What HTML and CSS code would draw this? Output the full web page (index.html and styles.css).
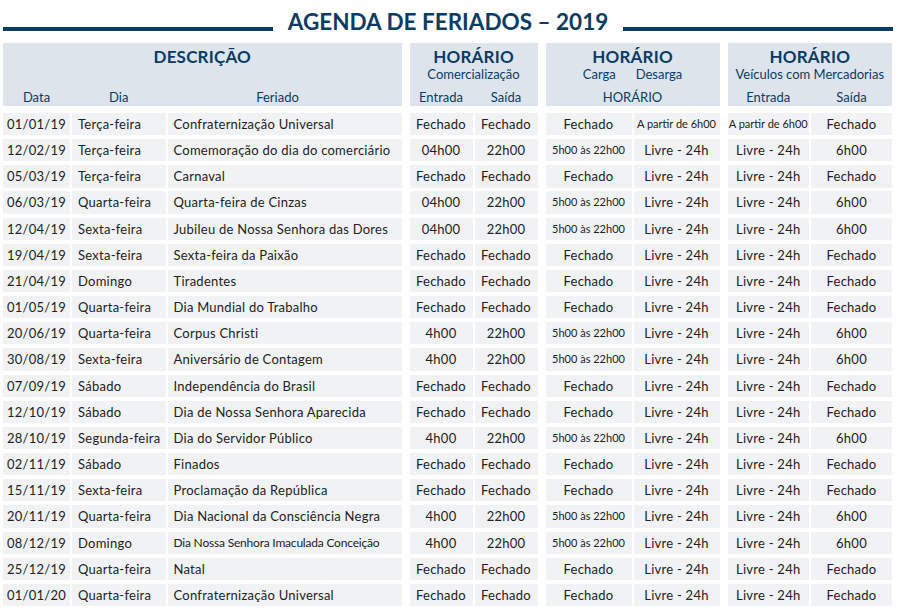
FILE: index.html
```html
<!DOCTYPE html>
<html lang="pt-BR">
<head>
<meta charset="utf-8">
<title>Agenda de Feriados 2019</title>
<link rel="stylesheet" href="styles.css">
</head>
<body>
<div class="page">
  <div class="title">
    <span class="rule"></span>
    <h1>AGENDA DE FERIADOS – 2019</h1>
    <span class="rule"></span>
  </div>

  <div class="hdr">
    <div class="panel p1">
      <div class="ph">DESCRIÇÃO</div>
      <div class="ps"></div>
      <div class="pc cols3"><span>Data</span><span>Dia</span><span>Feriado</span></div>
    </div>
    <div class="panel p2 gs">
      <div class="ph">HORÁRIO</div>
      <div class="ps">Comercialização</div>
      <div class="pc cols2a"><span>Entrada</span><span>Saída</span></div>
    </div>
    <div class="panel p3 gs">
      <div class="ph">HORÁRIO</div>
      <div class="ps">Carga&nbsp;&nbsp;&nbsp;&nbsp;&nbsp;&nbsp;Desarga</div>
      <div class="pc"><span>HORÁRIO</span></div>
    </div>
    <div class="panel p4 gs">
      <div class="ph">HORÁRIO</div>
      <div class="ps">Veículos com Mercadorias</div>
      <div class="pc cols2b"><span>Entrada</span><span>Saída</span></div>
    </div>
  </div>

  <div class="body">
    <div>01/01/19</div><div>Terça-feira</div><div>Confraternização Universal</div><div>Fechado</div><div>Fechado</div><div>Fechado</div><div class="sm">A partir de 6h00</div><div class="sm">A partir de 6h00</div><div>Fechado</div>
    <div>12/02/19</div><div>Terça-feira</div><div>Comemoração do dia do comerciário</div><div>04h00</div><div>22h00</div><div class="sm">5h00 às 22h00</div><div>Livre - 24h</div><div>Livre - 24h</div><div>6h00</div>
    <div>05/03/19</div><div>Terça-feira</div><div>Carnaval</div><div>Fechado</div><div>Fechado</div><div>Fechado</div><div>Livre - 24h</div><div>Livre - 24h</div><div>Fechado</div>
    <div>06/03/19</div><div>Quarta-feira</div><div>Quarta-feira de Cinzas</div><div>04h00</div><div>22h00</div><div class="sm">5h00 às 22h00</div><div>Livre - 24h</div><div>Livre - 24h</div><div>6h00</div>
    <div>12/04/19</div><div>Sexta-feira</div><div>Jubileu de Nossa Senhora das Dores</div><div>04h00</div><div>22h00</div><div class="sm">5h00 às 22h00</div><div>Livre - 24h</div><div>Livre - 24h</div><div>6h00</div>
    <div>19/04/19</div><div>Sexta-feira</div><div>Sexta-feira da Paixão</div><div>Fechado</div><div>Fechado</div><div>Fechado</div><div>Livre - 24h</div><div>Livre - 24h</div><div>Fechado</div>
    <div>21/04/19</div><div>Domingo</div><div>Tiradentes</div><div>Fechado</div><div>Fechado</div><div>Fechado</div><div>Livre - 24h</div><div>Livre - 24h</div><div>Fechado</div>
    <div>01/05/19</div><div>Quarta-feira</div><div>Dia Mundial do Trabalho</div><div>Fechado</div><div>Fechado</div><div>Fechado</div><div>Livre - 24h</div><div>Livre - 24h</div><div>Fechado</div>
    <div>20/06/19</div><div>Quarta-feira</div><div>Corpus Christi</div><div>4h00</div><div>22h00</div><div class="sm">5h00 às 22h00</div><div>Livre - 24h</div><div>Livre - 24h</div><div>6h00</div>
    <div>30/08/19</div><div>Sexta-feira</div><div>Aniversário de Contagem</div><div>4h00</div><div>22h00</div><div class="sm">5h00 às 22h00</div><div>Livre - 24h</div><div>Livre - 24h</div><div>6h00</div>
    <div>07/09/19</div><div>Sábado</div><div>Independência do Brasil</div><div>Fechado</div><div>Fechado</div><div>Fechado</div><div>Livre - 24h</div><div>Livre - 24h</div><div>Fechado</div>
    <div>12/10/19</div><div>Sábado</div><div>Dia de Nossa Senhora Aparecida</div><div>Fechado</div><div>Fechado</div><div>Fechado</div><div>Livre - 24h</div><div>Livre - 24h</div><div>Fechado</div>
    <div>28/10/19</div><div>Segunda-feira</div><div>Dia do Servidor Público</div><div>4h00</div><div>22h00</div><div class="sm">5h00 às 22h00</div><div>Livre - 24h</div><div>Livre - 24h</div><div>6h00</div>
    <div>02/11/19</div><div>Sábado</div><div>Finados</div><div>Fechado</div><div>Fechado</div><div>Fechado</div><div>Livre - 24h</div><div>Livre - 24h</div><div>Fechado</div>
    <div>15/11/19</div><div>Sexta-feira</div><div>Proclamação da República</div><div>Fechado</div><div>Fechado</div><div>Fechado</div><div>Livre - 24h</div><div>Livre - 24h</div><div>Fechado</div>
    <div>20/11/19</div><div>Quarta-feira</div><div>Dia Nacional da Consciência Negra</div><div>4h00</div><div>22h00</div><div class="sm">5h00 às 22h00</div><div>Livre - 24h</div><div>Livre - 24h</div><div>6h00</div>
    <div>08/12/19</div><div>Domingo</div><div class="smf">Dia Nossa Senhora Imaculada Conceição</div><div>4h00</div><div>22h00</div><div class="sm">5h00 às 22h00</div><div>Livre - 24h</div><div>Livre - 24h</div><div>6h00</div>
    <div>25/12/19</div><div>Quarta-feira</div><div>Natal</div><div>Fechado</div><div>Fechado</div><div>Fechado</div><div>Livre - 24h</div><div>Livre - 24h</div><div>Fechado</div>
    <div>01/01/20</div><div>Quarta-feira</div><div>Confraternização Universal</div><div>Fechado</div><div>Fechado</div><div>Fechado</div><div>Livre - 24h</div><div>Livre - 24h</div><div>Fechado</div>
  </div>
</div>
</body>
</html>
```

FILE: styles.css
```css
html, body {
  margin: 0;
  padding: 0;
  background: #ffffff;
}

body {
  font-family: Lato, "Noto Sans", sans-serif;
  color: #222222;
}

.page {
  width: 890px;
  padding: 0 3px;
}

/* Title */
.title {
  display: flex;
  align-items: flex-start;
  gap: 15px;
  height: 43px;
}

.title .rule {
  flex: 1;
  height: 4px;
  margin-top: 27px;
  background: #0c3b64;
}

.title h1 {
  margin: 0;
  padding-top: 8px;
  font-size: 22.5px;
  line-height: 28px;
  font-weight: 700;
  color: #0c3b64;
  letter-spacing: 0;
  white-space: nowrap;
}

/* Shared column grid */
.hdr,
.body {
  display: grid;
  grid-template-columns: 67px 93.5px 234px 69px 63px 92px 86px 87.5px 81px;
  column-gap: 2px;
}

.hdr {
  margin-bottom: 7px;
}

.panel {
  background: #dde4ec;
  height: 63px;
  box-sizing: border-box;
  padding-top: 4px;
  color: #0c3b64;
  text-align: center;
}

.p1 { grid-column: 1 / 4; }
.p2 { grid-column: 4 / 6; }
.p3 { grid-column: 6 / 8; }
.p4 { grid-column: 8 / 10; }

.gs { margin-left: 6px; }

.ph {
  font-size: 17px;
  line-height: 20px;
  font-weight: 700;
  letter-spacing: 0.2px;
}

.ps {
  font-size: 13px;
  line-height: 15px;
  height: 15px;
  white-space: nowrap;
}

.pc {
  margin-top: 8px;
  font-size: 13px;
  line-height: 15px;
  display: grid;
}

.cols3 {
  grid-template-columns: 67px 93.5px 1fr;
  column-gap: 2px;
}

.cols3 span:last-child {
  padding-right: 14px;
}

.cols2a {
  grid-template-columns: 1fr 1fr;
  column-gap: 2px;
}

.cols2b {
  grid-template-columns: 81.5px 1fr;
  column-gap: 2px;
}

/* Body */
.body {
  grid-auto-rows: 22.2px;
  row-gap: 3.97px;
}

.body > div {
  background: #f1f2f4;
  font-size: 13px;
  line-height: 22.2px;
  letter-spacing: 0.25px;
  text-align: center;
  white-space: nowrap;
  overflow: hidden;
}

.body > div:nth-child(9n+2),
.body > div:nth-child(9n+3) {
  text-align: left;
  padding-left: 6px;
}

.body > div:nth-child(9n+4),
.body > div:nth-child(9n+6),
.body > div:nth-child(9n+8) {
  margin-left: 6px;
}

.body > div.sm {
  font-size: 11px;
  letter-spacing: 0;
}

.body > div.smf {
  font-size: 12px;
  letter-spacing: -0.2px;
}
```
